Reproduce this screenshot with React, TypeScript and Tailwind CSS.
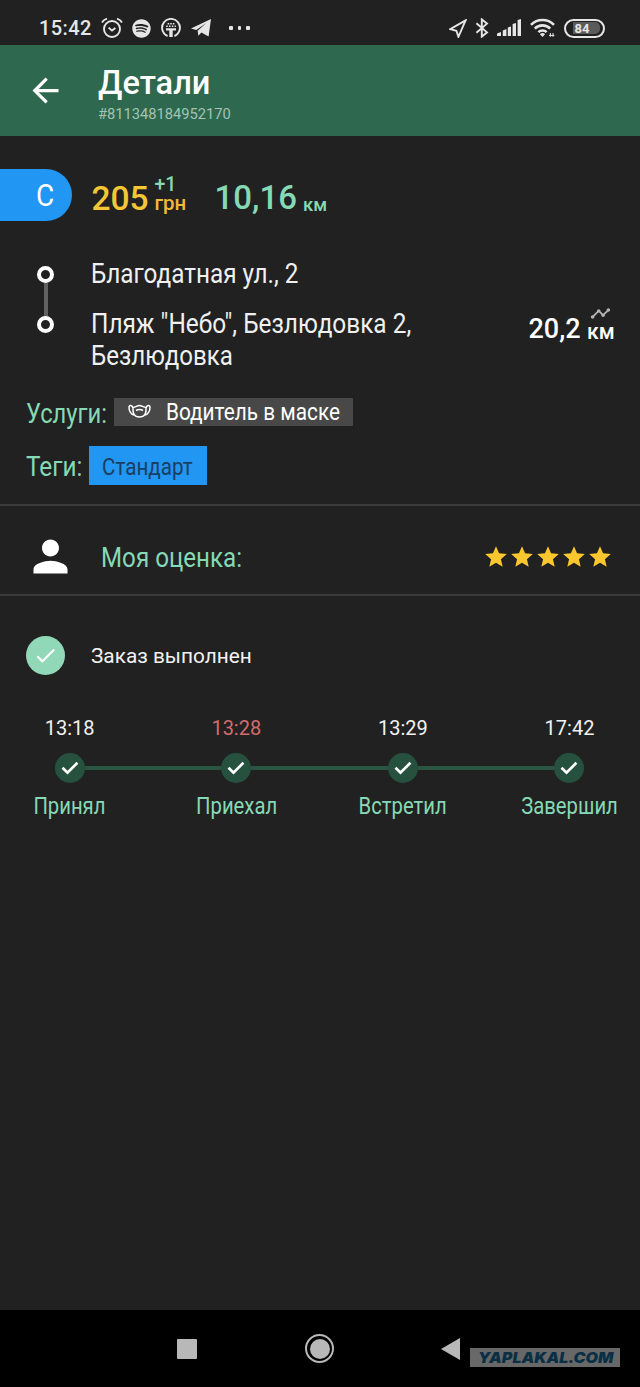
import { FaSpotify } from "react-icons/fa";
import { MdArrowBack, MdPerson, MdStar, MdCheck, MdTimeline } from "react-icons/md";
import clsx from "clsx";

interface Step {
  time: string;
  label: string;
  late?: boolean;
}

const steps: Step[] = [
  { time: "13:18", label: "Принял" },
  { time: "13:28", label: "Приехал", late: true },
  { time: "13:29", label: "Встретил" },
  { time: "17:42", label: "Завершил" },
];

function AlarmIcon() {
  return (
    <svg className="w-[22px] h-[22px]" viewBox="0 0 22 22" fill="none" stroke="currentColor">
      <circle cx="11" cy="12" r="8" strokeWidth="1.9" />
      <path d="M7.6 10.6 11 13.6l3.4-2.6" strokeWidth="1.9" />
      <path d="M1 5.4Q2.6 2.8 6 1.7M21 5.4Q19.4 2.8 16 1.7" strokeWidth="1.9" />
    </svg>
  );
}

function PodcastIcon() {
  return (
    <svg className="w-5 h-5" viewBox="0 0 20 20" fill="none" stroke="currentColor">
      <path d="M6.6 18A8.9 8.9 0 1 1 13.4 18" strokeWidth="1.9" />
      <path d="M5 10.2h10v2.2h-3.3V19H8.3v-6.6H5z" fill="currentColor" stroke="none" />
      <path d="M5.2 8.3h1.5M8 8.3h1.5M10.8 8.3h1.5M13.6 8.3h1.3M6.6 5.8h1.6M9.2 5.8h1.6M11.8 5.8h1.6" strokeWidth="1.6" />
    </svg>
  );
}

function StatusBar() {
  return (
    <div className="flex items-center h-[45px] pt-[11px] text-[#e6e6e6]">
      <span className="ml-[39px] w-[62px] text-[20px] leading-[34px] font-medium tracking-[0.4px]">15:42</span>
      <AlarmIcon />
      <FaSpotify className="ml-[9px] size-[19px]" />
      <span className="ml-[10px]">
        <PodcastIcon />
      </span>
      <svg className="ml-[10px] w-5 h-[18px]" viewBox="0 0 20 18" fill="currentColor">
        <path d="M0 9.5 20 0l-2.4 17.6-7.2-4.2-3 3.4-.8-5L15.4 4 5.2 11z" />
      </svg>
      <div className="ml-[18px] flex gap-[5px]">
        <i className="size-[3.5px] rounded-[1px] bg-current" />
        <i className="size-[3.5px] rounded-[1px] bg-current" />
        <i className="size-[3.5px] rounded-[1px] bg-current" />
      </div>
      <svg className="ml-[199px] w-[18px] h-[19px]" viewBox="0 0 18 19" fill="none" stroke="currentColor" strokeWidth="1.9">
        <path d="M16.6 1.4 1.2 10.2l6.2 1.600 2 6z" />
      </svg>
      <svg className="ml-[8px] w-[14px] h-5" viewBox="0 0 14 20" fill="none" stroke="currentColor" strokeWidth="1.9">
        <path d="M1.4 5.2 12 14.4l-5.2 4.2V1.4L12 5.6 1.4 14.8" />
      </svg>
      <svg className="ml-[8px] w-[25px] h-[18px]" viewBox="0 0 25 18" fill="currentColor">
        <path d="M0 14.6 4 13v4H0zM5.8 11.4 9.4 10v7H5.8zM10.8 8.4l3.2-1V17h-3.2zM15.6 5 19 4v13h-3.4zM20.6 1 24 0v17h-3.4z" />
      </svg>
      <svg className="ml-[8px] w-[26px] h-5" viewBox="0 0 26 20" fill="none" stroke="currentColor" strokeWidth="2.6">
        <path d="M1 6.8a16.2 16.2 0 0 1 23 0M4.8 10.6a10.8 10.8 0 0 1 15.4 0M8.4 14.2a5.8 5.8 0 0 1 8.2 0" />
        <path d="m12.5 19-2.6-2.8a4 4 0 0 1 5.2 0z" fill="currentColor" stroke="none" />
        <path d="M20.4 15v3.8M23 15v3.8M19 17.4h5.4" strokeWidth="1" />
      </svg>
      <div className="ml-[8px] flex h-[19px] w-[41px] items-center rounded-full border-2 border-current px-[2px]">
        <div className="ml-[5px] h-[12px] w-[27px] rounded-r-[5px] bg-[#5a5a5a] pl-[2px] text-[13px] leading-[13px] font-bold">84</div>
      </div>
    </div>
  );
}

function AppBar() {
  return (
    <header className="flex h-[91px] bg-[#2e684e]">
      <MdArrowBack className="ml-[26px] mt-[26px] size-[39px] text-white" />
      <div className="ml-[33px] pt-[19px]">
        <h1 className="text-[32.6px] leading-[38px] font-medium text-white">Детали</h1>
        <p className="mt-[4px] text-[14.7px] leading-[17px] text-[#a3c4b4]">#811348184952170</p>
      </div>
    </header>
  );
}

function PriceRow() {
  return (
    <div className="mt-[33px] flex h-[52px]">
      <div className="h-[52px] w-[72px] rounded-r-full bg-[#2196f3] pl-[36px] text-[31px] leading-[54px] text-white">
        <span className="inline-block origin-left scale-x-[.9]">С</span>
      </div>
      <span className="ml-[19.5px] w-[63px] text-[33.5px] leading-[59px] font-medium text-[#f4c636]">205</span>
      <div className="w-[60px] pt-[6px] text-[20.5px] font-medium">
        <p className="text-[19.5px] leading-[19px] text-[#86d9b5]">+1</p>
        <p className="leading-[18px] text-[#f0b93a]">грн</p>
      </div>
      <span className="w-[88.5px] text-[33px] leading-[58px] font-medium text-[#86d9b5]">10,16</span>
      <span className="text-[18.5px] leading-[72px] font-medium text-[#86d9b5]">км</span>
    </div>
  );
}

function Route() {
  return (
    <div className="mt-[37px] flex h-[114px]">
      <div className="ml-[37px] flex w-[54px] flex-col items-start pt-[8px]">
        <div className="size-[17px] rounded-full border-4 border-white" />
        <div className="ml-[6.5px] h-[33px] w-[4px] bg-[#616161]" />
        <div className="size-[17px] rounded-full border-4 border-white" />
      </div>
      <div className="w-[437.5px] text-[27px] leading-[32px] whitespace-nowrap text-[#f0f0f0]">
        <p className="origin-left scale-x-[.9]">Благодатная ул., 2</p>
        <p className="mt-[18px] origin-left scale-x-[.903]">Пляж "Небо", Безлюдовка 2,</p>
        <p className="origin-left scale-x-[.893]">Безлюдовка</p>
      </div>
      <div className="flex text-white">
        <span className="w-[58.500px] pt-[55px] text-[27px] leading-[32px] font-medium">20,2</span>
        <div className="pt-[45px]">
          <MdTimeline className="ml-[3px] size-[21px] text-[#b5b5b5]" />
          <p className="-mt-[6px] text-[21.2px] leading-[28px] font-medium">км</p>
        </div>
      </div>
    </div>
  );
}

function MaskIcon() {
  return (
    <svg className="h-[15px] w-[23px]" viewBox="0 0 23 15" fill="none" stroke="currentColor" strokeWidth="1.5">
      <path d="M5 3.5C8 3.2 9 1.5 11.5 1.5S15 3.2 18 3.5C18.5 9 17 13 11.5 13S4.5 9 5 3.5z" />
      <path d="M5 4C4 1 1 .8 1 3.5 1 7 3 10.5 6 11M18 4C19 1 22 .8 22 3.5 22 7 20 10.5 17 11M8 6.5C10.5 5 12.5 5 15 6.5" />
    </svg>
  );
}

function Details() {
  return (
    <div className="h-[132px] pt-[26px] text-[27px] whitespace-nowrap">
      <div className="flex h-[28px] pl-[26px]">
        <span className="w-[88px] leading-[32px] text-[#86d9b5]">
          <span className="inline-block origin-left scale-x-[.88]">Услуги:</span>
        </span>
        <div className="flex h-[28px] w-[239px] bg-[#484848] pl-[14px] text-white">
          <span className="mt-[6px] w-[38px] shrink-0">
            <MaskIcon />
          </span>
          <span className="origin-left scale-x-[.866] text-[24px] leading-[29px]">Водитель в маске</span>
        </div>
      </div>
      <div className="mt-[20px] flex h-[39px] pl-[26px]">
        <span className="w-[63px] leading-[42px] text-[#86d9b5]">
          <span className="inline-block origin-left scale-x-[.9]">Теги:</span>
        </span>
        <div className="h-[39px] w-[118px] bg-[#2196f3] pl-[13px] text-[24px] leading-[42px] text-[#1b3f60]">
          <span className="inline-block origin-left scale-x-[.86]">Стандарт</span>
        </div>
      </div>
    </div>
  );
}

function Rating() {
  return (
    <div className="flex h-[92px] items-center border-y-2 border-[#3a3a3a]">
      <MdPerson className="ml-[25px] mt-[13px] size-[51px] text-white" />
      <span className="ml-[25px] mt-[17px] w-[382px] text-[27px] text-[#86d9b5]">
        <span className="inline-block origin-left scale-x-[.895] whitespace-nowrap">Моя оценка:</span>
      </span>
      <div className="mt-[13px] flex text-[#fbc72e]">
        {[1, 2, 3, 4, 5].map((n) => (
          <MdStar key={n} className="size-[26px]" />
        ))}
      </div>
    </div>
  );
}

function StepItem({ step, index }: { step: Step; index: number }) {
  return (
    <div className="flex w-[166.6px] flex-col items-center">
      <span className={clsx("text-[20px] leading-[24px]", step.late ? "text-[#d36c6c]" : "text-[#f2f2f2]")}>
        {step.time}
      </span>
      <div className="mt-[12.5px] flex w-full items-center">
        <div className={clsx("h-[4px] flex-1", index > 0 && "bg-[#2a5543]")} />
        <div className="flex size-[30px] items-center justify-center rounded-full bg-[#25513e]">
          <svg className="h-[14px] w-[18px]" viewBox="0 0 18 14" fill="none" stroke="white" strokeWidth="2.7">
            <path d="M1.5 6.8 6.500 11.700 16.400 1.800" />
          </svg>
        </div>
        <div className={clsx("h-[4px] flex-1", index < steps.length - 1 && "bg-[#2a5543]")} />
      </div>
      <span className="mt-[9.5px] scale-x-[.87] text-[23.3px] leading-[28px] text-[#86d9b5]">{step.label}</span>
    </div>
  );
}

function Progress() {
  return (
    <>
      <div className="mt-[39.5px] flex h-[39px] items-center">
        <div className="ml-[26px] flex size-[39px] items-center justify-center rounded-full bg-[#90d8b8]">
          <MdCheck className="size-[25px] text-white" />
        </div>
        <span className="ml-[26px] mt-[3px] text-[20.8px] text-[#f2f2f2]">Заказ выполнен</span>
      </div>
      <div className="-ml-[13.6px] mt-[41.5px] flex w-[667px]">
        {steps.map((step, i) => (
          <StepItem key={step.label} step={step} index={i} />
        ))}
      </div>
    </>
  );
}

function NavBar() {
  return (
    <nav className="flex h-[77px] items-center bg-black text-[#b8b8b8]">
      <div className="ml-[177px] size-[20px] rounded-[1px] bg-current" />
      <div className="ml-[108px] flex size-[29px] items-center justify-center rounded-full border-2 border-current">
        <div className="size-[20px] rounded-full bg-current" />
      </div>
      <svg className="ml-[107px] w-[19px] h-[22px]" viewBox="0 0 19 22" fill="currentColor">
        <path d="M0 11 19 0v22z" />
      </svg>
    </nav>
  );
}

export default function App() {
  return (
    <div className="relative flex h-[1387px] w-[640px] flex-col overflow-hidden bg-[#212121] font-['Roboto',sans-serif]">
      <StatusBar />
      <AppBar />
      <main className="flex-1">
        <PriceRow />
        <Route />
        <Details />
        <Rating />
        <Progress />
      </main>
      <NavBar />
      <div className="absolute top-[1348px] left-[470px] h-[19px] w-[150px] bg-[#686868] pl-[8px] font-['Inter',sans-serif] text-[15px] leading-[19px] font-black text-[#0a2f45] italic">
        <span className="inline-block origin-left scale-x-[1.07]">YAPLAKAL.COM</span>
      </div>
    </div>
  );
}
